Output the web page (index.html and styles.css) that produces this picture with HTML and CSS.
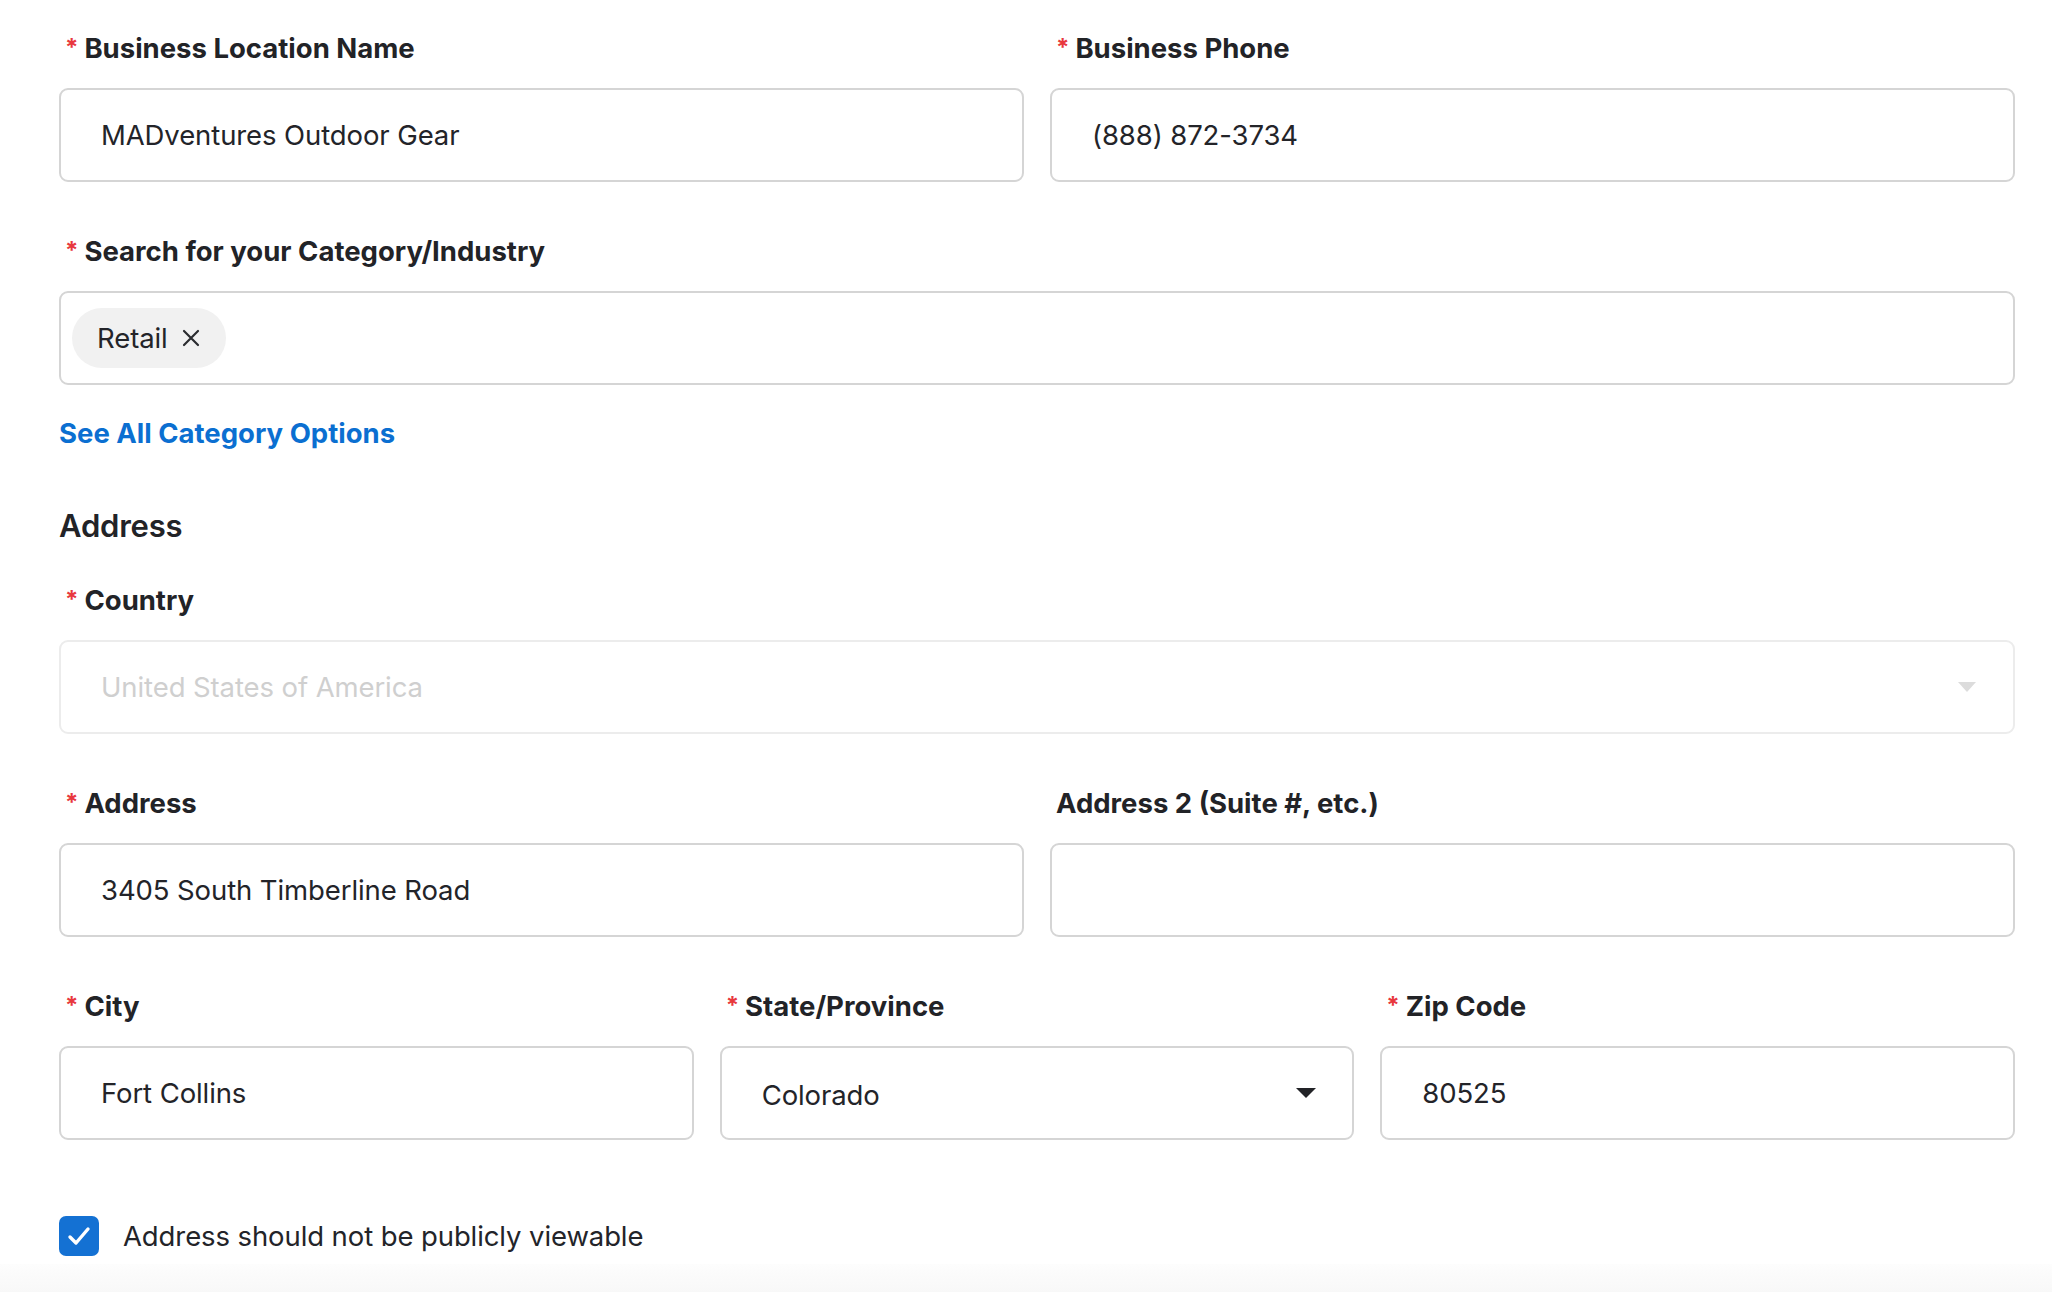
FILE: index.html
```html
<!DOCTYPE html>
<html lang="en">
<head>
<meta charset="utf-8">
<title>Business Location</title>
<link rel="stylesheet" href="styles.css">
</head>
<body>
<form class="form">
  <div class="row two">
    <div class="field">
      <label class="label"><span class="req">*</span>Business Location Name</label>
      <div class="input">MADventures Outdoor Gear</div>
    </div>
    <div class="field">
      <label class="label"><span class="req">*</span>Business Phone</label>
      <div class="input">(888) 872-3734</div>
    </div>
  </div>

  <div class="field">
    <label class="label"><span class="req">*</span>Search for your Category/Industry</label>
    <div class="input tags">
      <span class="chip">Retail
        <svg class="chip-x" viewBox="0 0 18 18" width="18" height="18"><path d="M2 2 L16 16 M16 2 L2 16" stroke="#2b2c30" stroke-width="2.2" stroke-linecap="round" fill="none"/></svg>
      </span>
    </div>
  </div>
  <a class="link" href="#">See All Category Options</a>

  <h2 class="heading">Address</h2>

  <div class="field">
    <label class="label"><span class="req">*</span>Country</label>
    <div class="input select disabled">United States of America
      <svg class="caret" viewBox="0 0 18 10" width="18" height="10"><path d="M0 0 L18 0 L9 10 Z" fill="#dcdcdc"/></svg>
    </div>
  </div>

  <div class="row two">
    <div class="field">
      <label class="label"><span class="req">*</span>Address</label>
      <div class="input">3405 South Timberline Road</div>
    </div>
    <div class="field">
      <label class="label plain">Address 2 (Suite #, etc.)</label>
      <div class="input"></div>
    </div>
  </div>

  <div class="row three">
    <div class="field">
      <label class="label"><span class="req">*</span>City</label>
      <div class="input">Fort Collins</div>
    </div>
    <div class="field">
      <label class="label"><span class="req">*</span>State/Province</label>
      <div class="input select"><span class="sel-text">Colorado</span>
        <svg class="caret dark" viewBox="0 0 20 10" width="20" height="10"><path d="M0 0 L20 0 L10 10 Z" fill="#222327"/></svg>
      </div>
    </div>
    <div class="field">
      <label class="label"><span class="req">*</span>Zip Code</label>
      <div class="input">80525</div>
    </div>
  </div>

  <div class="check-row">
    <span class="checkbox">
      <svg viewBox="0 0 40 40" width="40" height="40"><path d="M11 21 L17 27 L29 13" stroke="#ffffff" stroke-width="3.4" stroke-linecap="round" stroke-linejoin="round" fill="none"/></svg>
    </span>
    <span class="check-label">Address should not be publicly viewable</span>
  </div>
</form>
<div class="footer-fade"></div>
</body>
</html>
```

FILE: styles.css
```css
html, body {
  margin: 0;
  padding: 0;
  background: #ffffff;
}
body {
  font-family: Inter, "Noto Sans", "Liberation Sans", sans-serif;
  color: #232429;
  overflow: hidden;
}
.form {
  width: 1956px;
  padding: 30px 0 0 59px;
  display: flex;
  flex-direction: column;
}
.row {
  display: grid;
  column-gap: 26px;
}
.row.two { grid-template-columns: 1fr 1fr; }
.row.three { grid-template-columns: 1fr 1fr 1fr; }
.field {
  display: flex;
  flex-direction: column;
  margin-bottom: 51px;
}
.label {
  font-size: 27.5px;
  line-height: 36px;
  height: 36px;
  font-weight: 700;
  color: #222327;
  margin-bottom: 22px;
  padding-left: 6px;
  white-space: nowrap;
}
.req {
  color: #e8383d;
  font-size: 24px;
  line-height: 1;
  margin-right: 6px;
  position: relative;
  top: -2px;
}
.input {
  box-sizing: border-box;
  height: 94px;
  border: 2px solid #d5d5d5;
  border-radius: 9px;
  padding: 0 40px;
  display: flex;
  align-items: center;
  font-size: 27.5px;
  color: #232429;
  background: #fff;
  letter-spacing: -0.1px;
}
.input.tags {
  padding: 0 11px;
}
.chip {
  display: inline-flex;
  align-items: center;
  height: 60px;
  padding: 0 26px 0 25px;
  border-radius: 30px;
  background: #f1f1f1;
  font-size: 27.5px;
  color: #232429;
  gap: 14px;
}
.chip-x { display: block; }
.select {
  justify-content: space-between;
  padding-right: 36px;
}
.select.disabled {
  border-color: #ececec;
  color: #cfcfcf;
  padding-right: 37px;
}
.sel-text {
  position: relative;
  top: 2px;
}
.caret { display: block; }
.link {
  font-size: 27.5px;
  line-height: 36px;
  font-weight: 700;
  color: #0b6fd1;
  text-decoration: none;
  margin-top: -21px;
  align-self: flex-start;
}
.heading {
  font-size: 31px;
  line-height: 40px;
  font-weight: 600;
  color: #222327;
  margin: 55px 0 36px 0;
  letter-spacing: -0.2px;
}
.check-row {
  display: flex;
  align-items: center;
  gap: 24px;
  margin-top: 25px;
  height: 40px;
}
.checkbox {
  width: 40px;
  height: 40px;
  border-radius: 7px;
  background: #1471d3;
  display: block;
}
.checkbox svg { display: block; }
.check-label {
  font-size: 27.5px;
  color: #232429;
  letter-spacing: -0.1px;
}
.footer-fade {
  height: 40px;
  margin-top: 8px;
  background: linear-gradient(#fdfdfd, #f6f6f6);
}
```
